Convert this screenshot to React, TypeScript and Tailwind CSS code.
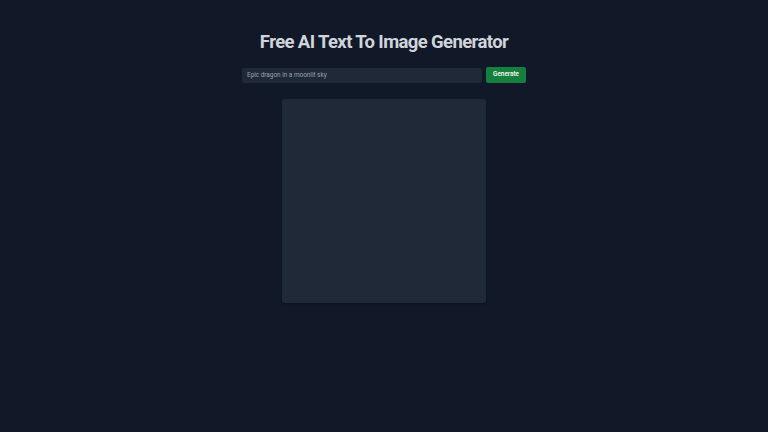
export default function App() {
  return (
    <div className="w-[768px] h-[432px] bg-[#111827] flex flex-col items-center pt-[30px]" style={{ fontFamily: "Roboto, 'Liberation Sans', sans-serif" }}>
      <h1 className="text-[18.5px] leading-[24px] font-bold text-[#d1d5db] tracking-[-0.62px]">Free AI Text To Image Generator</h1>
      <div className="flex items-center gap-[4px] mt-[13px]">
        <input
          placeholder="Epic dragon in a moonlit sky"
          className="w-[240px] h-[15px] rounded-[2px] bg-[#1f2937] text-[6.4px] px-[5px] text-[#d1d5db] placeholder:text-[#9ca3af] outline-none"
        />
        <button className="w-[40px] h-[16px] rounded-[2px] bg-[#15803d] text-white text-[6.4px] font-medium">Generate</button>
      </div>
      <div className="mt-[16px] w-[204px] h-[204px] rounded-[2px] bg-[#1f2937] shadow-[0_1px_3px_rgba(0,0,0,0.3)]"></div>
    </div>
  );
}
